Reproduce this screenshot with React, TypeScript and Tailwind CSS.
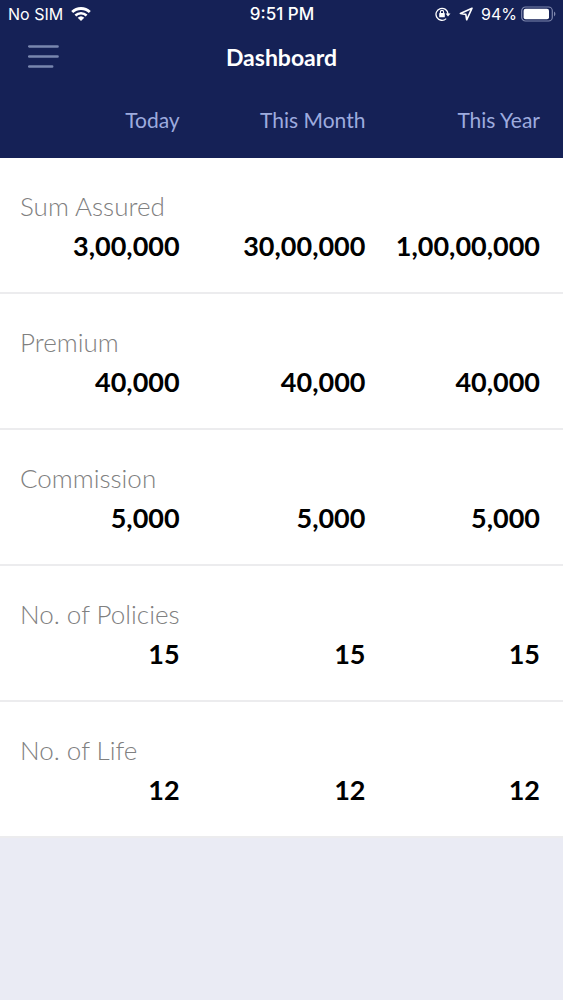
import { Fragment } from "react";

interface Metric {
  label: string;
  values: string[];
}

const periods = ["Today", "This Month", "This Year"];

const metrics: Metric[] = [
  { label: "Sum Assured", values: ["3,00,000", "30,00,000", "1,00,00,000"] },
  { label: "Premium", values: ["40,000", "40,000", "40,000"] },
  { label: "Commission", values: ["5,000", "5,000", "5,000"] },
  { label: "No. of Policies", values: ["15", "15", "15"] },
  { label: "No. of Life", values: ["12", "12", "12"] },
];

const WifiIcon = () => (
  <svg aria-hidden="true" className="h-[14px] w-[20px]" fill="none" viewBox="0 0 20 14">
    <path d="M1.2 5.1a12.6 12.6 0 0 1 17.6 0" stroke="currentColor" strokeWidth="2.8" />
    <path d="M4.4 8.5a8 8 0 0 1 11.2 0" stroke="currentColor" strokeWidth="2.5" />
    <path d="M10 14 6.7 10.7a4.8 4.8 0 0 1 6.6 0Z" fill="currentColor" />
  </svg>
);

const RotationLockIcon = () => (
  <svg aria-hidden="true" className="h-[14px] w-[16px]" fill="none" viewBox="0 0 16 14">
    <path d="M11.2 11.6A6 6 0 1 1 13 7" stroke="currentColor" strokeWidth="1.3" />
    <path d="M10.6 6.6h4.9L13 9.6Z" fill="currentColor" />
    <rect fill="currentColor" height="4.2" rx="0.6" width="5.6" x="4.2" y="6.1" />
    <path d="M5.4 6.4V5a1.6 1.6 0 0 1 3.2 0v1.4" stroke="currentColor" strokeWidth="1.1" />
  </svg>
);

const LocationIcon = () => (
  <svg aria-hidden="true" className="h-[14px] w-[14px]" fill="none" viewBox="0 0 14 14">
    <path
      d="M13 1.2 1.4 6.5l5.4.9.9 5.4Z"
      stroke="currentColor"
      strokeLinejoin="round"
      strokeWidth="1.6"
    />
  </svg>
);

const BatteryIcon = () => (
  <svg aria-hidden="true" className="h-[16px] w-[35px]" fill="none" viewBox="0 0 35 16">
    <rect height="14" rx="3.8" stroke="#7f88ae" strokeWidth="1.2" width="30.6" x="0.7" y="1" />
    <rect fill="currentColor" height="10.4" rx="2" width="25.4" x="2.6" y="2.8" />
    <path d="M33 5.6c1.9.9 1.9 3.9 0 4.8Z" fill="#7f88ae" />
  </svg>
);

const StatusBar = () => (
  <div className="grid h-7 grid-cols-[1fr_auto_1fr] items-center pr-[7px] pl-2 font-[Inter,sans-serif] text-base">
    <div className="flex items-center gap-2">
      <span>No SIM</span>
      <WifiIcon />
    </div>
    <span className="text-[17px] leading-7 font-medium">9:51 PM</span>
    <div className="flex items-center justify-end gap-2">
      <RotationLockIcon />
      <LocationIcon />
      <div className="flex items-center gap-1">
        <span>94%</span>
        <BatteryIcon />
      </div>
    </div>
  </div>
);

const NavBar = () => (
  <div className="grid h-[58px] grid-cols-[1fr_auto_1fr] items-center px-7">
    <button aria-label="Open menu" className="w-8 text-[#7886ae]" type="button">
      <svg aria-hidden="true" className="h-6 w-8" fill="none" viewBox="0 0 32 24">
        <path
          d="M1.2 1.4h28.4M1.2 11.5h28.4M1.2 21.6h23"
          stroke="currentColor"
          strokeLinecap="round"
          strokeWidth="2.5"
        />
      </svg>
    </button>
    <h1 className="text-[23px] font-bold">Dashboard</h1>
  </div>
);

export default function App() {
  return (
    <div className="min-h-screen bg-[#eaebf4] font-[Lato,sans-serif]">
      <header className="bg-[#152156] text-white">
        <StatusBar />
        <NavBar />
      </header>
      <table className="w-full table-fixed border-collapse">
        <colgroup>
          <col className="w-[36%]" />
          <col className="w-[33%]" />
          <col className="w-[31%]" />
        </colgroup>
        <thead className="bg-[#152156] text-[#9dabde]">
          <tr className="h-[72px]">
            {periods.map((period) => (
              <th
                className="pt-5 pr-[23px] text-right align-top text-[21px] leading-7 font-normal"
                key={period}
                scope="col"
              >
                {period}
              </th>
            ))}
          </tr>
        </thead>
        <tbody className="bg-white">
          {metrics.map(({ label, values }) => (
            <Fragment key={label}>
              <tr className="h-16">
                <th
                  className="pt-8 pl-5 text-left align-top text-[26px] leading-8 font-light text-[#808080]"
                  colSpan={3}
                  scope="rowgroup"
                >
                  {label}
                </th>
              </tr>
              <tr className="h-[72px] shadow-[inset_0_-2px_0_#ececee]">
                {values.map((value, index) => (
                  <td
                    className="pt-2 pr-[23px] text-right align-top text-[27px] leading-8 font-bold text-black"
                    key={periods[index]}
                  >
                    {value}
                  </td>
                ))}
              </tr>
            </Fragment>
          ))}
        </tbody>
      </table>
    </div>
  );
}
